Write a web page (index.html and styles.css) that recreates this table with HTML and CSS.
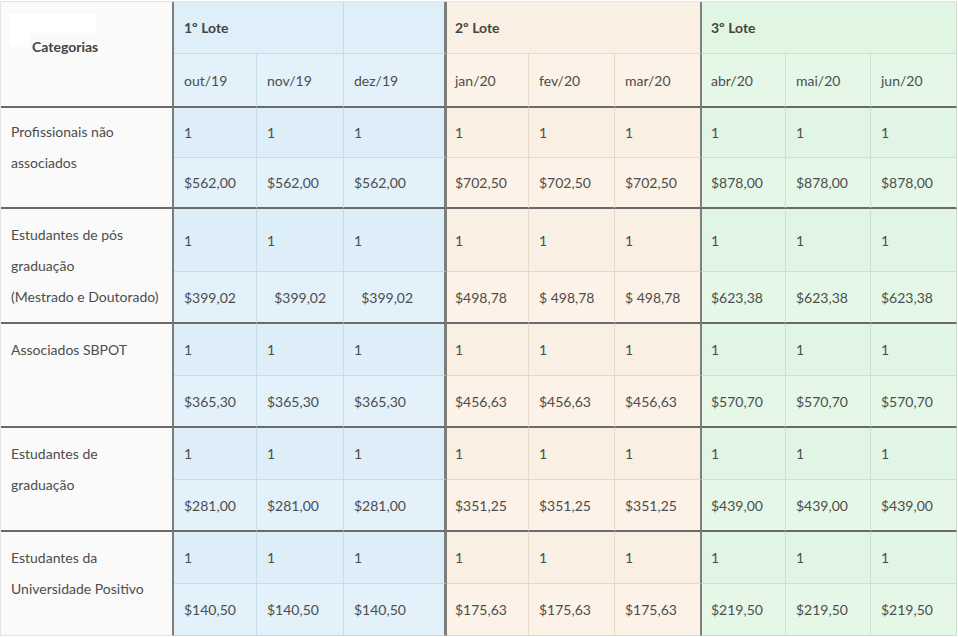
FILE: index.html
```html
<!DOCTYPE html>
<html lang="pt-BR">
<head>
<meta charset="utf-8">
<title>Tabela de preços</title>
<link rel="stylesheet" href="styles.css">
</head>
<body>
<div class="prices" role="table">
  <div class="cell head-cat tb" role="columnheader">
    <div class="blank"></div>
    <div class="head-cat-line"><span class="blank-inline"></span><span class="head-cat-text">Categorias</span></div>
  </div>
  <div class="cell l1 h1 bold span2" role="columnheader">1º Lote</div>
  <div class="cell l1 h1 c3" role="columnheader"></div>
  <div class="cell l2 h1 bold span3 first2" role="columnheader">2º Lote</div>
  <div class="cell l3 h1 bold span3 first3" role="columnheader">3º Lote</div>

  <div class="cell l1 h2 tb">out/19</div>
  <div class="cell l1 h2 tb">nov/19</div>
  <div class="cell l1 h2 tb c3">dez/19</div>
  <div class="cell l2 h2 tb first2">jan/20</div>
  <div class="cell l2 h2 tb">fev/20</div>
  <div class="cell l2 h2 tb c6">mar/20</div>
  <div class="cell l3 h2 tb first3">abr/20</div>
  <div class="cell l3 h2 tb">mai/20</div>
  <div class="cell l3 h2 tb">jun/20</div>

  <!-- Profissionais não associados -->
  <div class="cat cat-first">Profissionais não<br>associados</div>
  <div class="cell l1 q">1</div>
  <div class="cell l1 q">1</div>
  <div class="cell l1 q c3">1</div>
  <div class="cell l2 q first2">1</div>
  <div class="cell l2 q">1</div>
  <div class="cell l2 q c6">1</div>
  <div class="cell l3 q first3">1</div>
  <div class="cell l3 q">1</div>
  <div class="cell l3 q">1</div>
  <div class="cell l1 p tb">$562,00</div>
  <div class="cell l1 p tb">$562,00</div>
  <div class="cell l1 p tb c3">$562,00</div>
  <div class="cell l2 p tb first2">$702,50</div>
  <div class="cell l2 p tb">$702,50</div>
  <div class="cell l2 p tb c6">$702,50</div>
  <div class="cell l3 p tb first3">$878,00</div>
  <div class="cell l3 p tb">$878,00</div>
  <div class="cell l3 p tb">$878,00</div>

  <!-- Estudantes de pós graduação -->
  <div class="cat">Estudantes de pós<br>graduação<br>(Mestrado e Doutorado)</div>
  <div class="cell l1 q">1</div>
  <div class="cell l1 q">1</div>
  <div class="cell l1 q c3">1</div>
  <div class="cell l2 q first2">1</div>
  <div class="cell l2 q">1</div>
  <div class="cell l2 q c6">1</div>
  <div class="cell l3 q first3">1</div>
  <div class="cell l3 q">1</div>
  <div class="cell l3 q">1</div>
  <div class="cell l1 p tb">$399,02</div>
  <div class="cell l1 p tb">&nbsp;&nbsp;$399,02</div>
  <div class="cell l1 p tb c3">&nbsp;&nbsp;$399,02</div>
  <div class="cell l2 p tb first2">$498,78</div>
  <div class="cell l2 p tb">$ 498,78</div>
  <div class="cell l2 p tb c6">$ 498,78</div>
  <div class="cell l3 p tb first3">$623,38</div>
  <div class="cell l3 p tb">$623,38</div>
  <div class="cell l3 p tb">$623,38</div>

  <!-- Associados SBPOT -->
  <div class="cat">Associados SBPOT</div>
  <div class="cell l1 q">1</div>
  <div class="cell l1 q">1</div>
  <div class="cell l1 q c3">1</div>
  <div class="cell l2 q first2">1</div>
  <div class="cell l2 q">1</div>
  <div class="cell l2 q c6">1</div>
  <div class="cell l3 q first3">1</div>
  <div class="cell l3 q">1</div>
  <div class="cell l3 q">1</div>
  <div class="cell l1 p tb">$365,30</div>
  <div class="cell l1 p tb">$365,30</div>
  <div class="cell l1 p tb c3">$365,30</div>
  <div class="cell l2 p tb first2">$456,63</div>
  <div class="cell l2 p tb">$456,63</div>
  <div class="cell l2 p tb c6">$456,63</div>
  <div class="cell l3 p tb first3">$570,70</div>
  <div class="cell l3 p tb">$570,70</div>
  <div class="cell l3 p tb">$570,70</div>

  <!-- Estudantes de graduação -->
  <div class="cat">Estudantes de<br>graduação</div>
  <div class="cell l1 q">1</div>
  <div class="cell l1 q">1</div>
  <div class="cell l1 q c3">1</div>
  <div class="cell l2 q first2">1</div>
  <div class="cell l2 q">1</div>
  <div class="cell l2 q c6">1</div>
  <div class="cell l3 q first3">1</div>
  <div class="cell l3 q">1</div>
  <div class="cell l3 q">1</div>
  <div class="cell l1 p tb">$281,00</div>
  <div class="cell l1 p tb">$281,00</div>
  <div class="cell l1 p tb c3">$281,00</div>
  <div class="cell l2 p tb first2">$351,25</div>
  <div class="cell l2 p tb">$351,25</div>
  <div class="cell l2 p tb c6">$351,25</div>
  <div class="cell l3 p tb first3">$439,00</div>
  <div class="cell l3 p tb">$439,00</div>
  <div class="cell l3 p tb">$439,00</div>

  <!-- Estudantes da Universidade Positivo -->
  <div class="cat last">Estudantes da<br>Universidade Positivo</div>
  <div class="cell l1 q">1</div>
  <div class="cell l1 q">1</div>
  <div class="cell l1 q c3">1</div>
  <div class="cell l2 q first2">1</div>
  <div class="cell l2 q">1</div>
  <div class="cell l2 q c6">1</div>
  <div class="cell l3 q first3">1</div>
  <div class="cell l3 q">1</div>
  <div class="cell l3 q">1</div>
  <div class="cell l1 p">$140,50</div>
  <div class="cell l1 p">$140,50</div>
  <div class="cell l1 p c3">$140,50</div>
  <div class="cell l2 p first2">$175,63</div>
  <div class="cell l2 p">$175,63</div>
  <div class="cell l2 p c6">$175,63</div>
  <div class="cell l3 p first3">$219,50</div>
  <div class="cell l3 p">$219,50</div>
  <div class="cell l3 p">$219,50</div>
</div>
</body>
</html>
```

FILE: styles.css
```css
html, body {
  margin: 0;
  padding: 0;
  background: #ffffff;
}

body {
  font-family: Lato, "Liberation Sans", sans-serif;
  font-size: 14px;
  color: #4d4d4d;
}

.prices {
  margin-top: 1px;
  width: 957px;
  box-sizing: border-box;
  border-top: 1px solid #e4e4e4;
  border-left: 1px solid #e4e4e4;
  display: grid;
  grid-template-columns: 173px 83px 87px 103px 82px 86px 87px 84px 85px 86px;
  grid-template-rows: 52px 54px 50px 51px 63px 52px 52px 52px 52px 52px 52px 52px;
}

.cell {
  box-sizing: border-box;
  display: flex;
  align-items: center;
  padding: 0 4px 0 10px;
  white-space: nowrap;
  border-right: 1px solid #c6dbe7;
  border-bottom: 1px solid #c6dbe7;
}

.bold {
  font-weight: 700;
  color: #444444;
}

.span2 { grid-column: span 2; }
.span3 { grid-column: span 3; }

/* Lote colours */
.l1 { background: #e2f1fa; border-color: #c6dbe7; }
.l2 { background: #fcf2e7; border-color: #e6d9c8; }
.l3 { background: #e5f8e7; border-color: #c9e3cc; }

.l1.q { background: #deeef8; }
.l2.q { background: #faefe3; }
.l3.q { background: #e0f5e3; }

.l1.h1 { background: #dfeff9; }
.l2.h1 { background: #faefe3; }
.l3.h1 { background: #e1f5e3; }

/* last column of each lote gets the thick divider */
.c3 { border-right: 3px solid #7f7d7a; }
.c6 { border-right: 2px solid #7f7f7f; }
.l2.h1 { border-right: 2px solid #7f7f7f; }

.first2 { padding-left: 8px; }
.first3 { padding-left: 9px; }

/* thick row separators */
.tb { border-bottom: 2px solid #6a6a6a; }

/* category header */
.head-cat {
  grid-row: span 2;
  display: block;
  padding: 12px 0 0 8px;
  background: #fafafa;
  border-right: 2px solid #7d7d7d;
  border-bottom: 2px solid #6a6a6a;
}

.blank {
  width: 87px;
  height: 19px;
  background: #ffffff;
}

.head-cat-line {
  display: flex;
  align-items: flex-start;
  line-height: 28px;
}

.blank-inline {
  width: 20px;
  height: 14px;
  background: #ffffff;
}

.head-cat-text {
  margin-left: 3px;
  font-weight: 700;
  color: #444444;
}

/* category column */
.cat {
  grid-row: span 2;
  box-sizing: border-box;
  padding: 10px 4px 0 10px;
  line-height: 31px;
  background: #fafafa;
  border-right: 2px solid #7d7d7d;
  border-bottom: 2px solid #6a6a6a;
  white-space: nowrap;
}

.cat-first { padding-top: 8px; }

.cat.last { border-bottom: 1px solid #e4e4e4; }
```
